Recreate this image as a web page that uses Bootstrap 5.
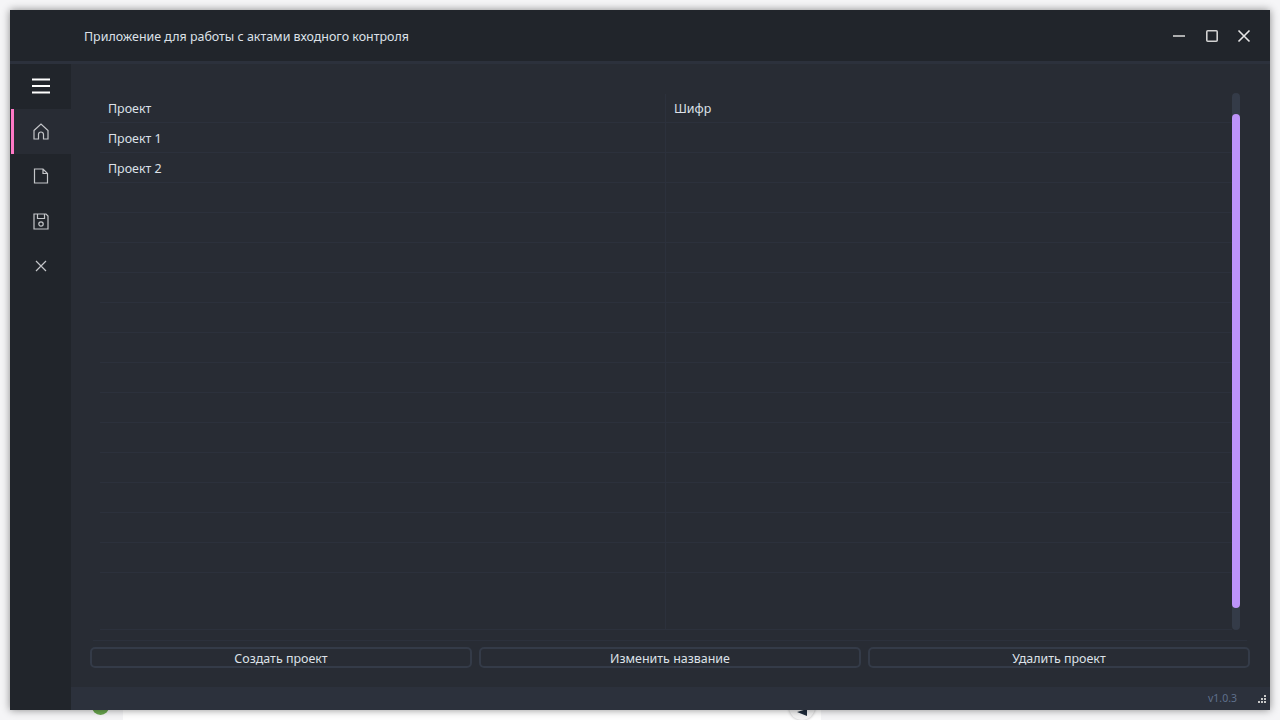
<!DOCTYPE html>
<html lang="ru">
<head>
    <meta charset="UTF-8">
    <title>Акты входного контроля</title>
    <link href="https://cdn.jsdelivr.net/npm/bootstrap@5.3.0/dist/css/bootstrap.min.css" rel="stylesheet">
    <style>
        html, body { height: 100%; overflow: hidden; }
        body { background: #f5f5f7; padding: 10px; font-family: "Noto Sans", "Open Sans", sans-serif; font-size: 12.45px; color: #dde1e8; position: relative; }
        .desk-page { position: absolute; left: 123px; top: 700px; width: 698px; height: 20px; background: #fff; }
        .desk-dot { position: absolute; left: 92px; top: 698px; width: 17px; height: 17px; border-radius: 50%; background: #6aa84f; }
        .desk-round { position: absolute; left: 789px; top: 694px; width: 26px; height: 26px; border-radius: 50%; background: #f4f4f4; box-shadow: 0 0 3px rgba(0, 0, 0, .3); }
        .desk-arrow { position: absolute; left: 797px; top: 709px; }
        .app-window { width: 1260px; height: 700px; background: #282c34; box-shadow: 0 0 8px rgba(0, 0, 0, .45); position: relative; }
        .title-bar { height: 51px; background: #21252b; padding-left: 74px; padding-right: 10px; }
        .title-text { margin-top: 3px; }
        .title-strip { height: 3px; background: #2c313c; }
        .win-btn { width: 32px; height: 32px; padding: 0; background: none; border: 0; }
        .side-menu { width: 61px; background: #21252b; }
        .side-item { height: 45px; }
        .side-item svg { margin-bottom: 1px; }
        .side-item.active-item { background: #282c34; border-left: 3px solid #ff79c6; margin-left: 1px; padding-right: 4px; }
        .table-frame { height: 577px; margin: 0 23px 6px 22px; padding: 30px 0 0 7px; border-bottom: 1px solid #2c313c; }
        .grid-wrap { width: 1132px; }
        .grid-row { height: 30px; border-bottom: 1px solid #2c313c; }
        .grid-row.grid-head { height: 29px; }
        .grid-row.grid-last { height: 57px; }
        .grid-cell { padding-left: 8px; line-height: 31px; }
        .grid-head .grid-cell { line-height: 29px; }
        .grid-cell + .grid-cell { border-left: 1px solid #2c313c; }
        .first-col { width: 565px; }
        .v-scroll { width: 8px; height: 537px; margin-top: -1px; background: #343b48; border-radius: 4px; padding-top: 21px; }
        .v-thumb { height: 494px; background: #bd93f9; border-radius: 4px; }
        .action-row { padding: 0 20px 0 19px; gap: 7px; }
        .action-btn { flex: 1 1 0; height: 21px; padding: 0; line-height: 19px; font-size: 12.45px; color: #dde1e8; background: #282c34; border: 2px solid #343b48; border-radius: 5px; }
        .status-bar { height: 23px; background: #2c313c; padding-right: 3px; }
        .version-text { font-size: 10.5px; color: #5f708c; margin-right: 20px; }
    </style>
</head>
<body>
    <div class="desk-page"></div>
    <div class="desk-dot"></div>
    <div class="desk-round"></div>
    <svg class="desk-arrow" width="12" height="7" viewBox="0 0 12 7"><path d="M0 3 10 0v7z" fill="#1f2d3d"/></svg>

    <div class="app-window d-flex flex-column">
        <!-- Title bar -->
        <div class="title-bar d-flex align-items-center justify-content-between">
            <span class="title-text">Приложение для работы с актами входного контроля</span>
            <div class="d-flex">
                <button class="win-btn" aria-label="Свернуть"><svg width="14" height="14" viewBox="0 0 14 14"><path d="M0 7h12" stroke="#d2d2d2" stroke-width="1.6"/></svg></button>
                <button class="win-btn" aria-label="Развернуть"><svg width="14" height="14" viewBox="0 0 14 14"><rect x="1.8" y="1.8" width="10.4" height="10.4" rx="1" fill="none" stroke="#d2d2d2" stroke-width="1.6"/></svg></button>
                <button class="win-btn" aria-label="Закрыть"><svg width="14" height="14" viewBox="0 0 14 14"><path d="M1.5 1.5l11 11M12.5 1.5l-11 11" stroke="#e6e6e6" stroke-width="1.6"/></svg></button>
            </div>
        </div>
        <div class="title-strip"></div>

        <div class="d-flex flex-grow-1">
            <!-- Side menu -->
            <div class="side-menu flex-shrink-0">
                <div class="side-item d-flex align-items-center justify-content-center">
                    <svg width="20" height="16" viewBox="0 0 20 16"><path d="M1 1.5h18M1 8h18M1 14.5h18" stroke="#fff" stroke-width="2.2"/></svg>
                </div>
                <div class="side-item active-item d-flex align-items-center justify-content-center">
                    <svg width="16" height="17" viewBox="0 0 16 17" fill="none" stroke="#c4c6c9" stroke-width="1.2"><path d="M1 7.5 8 1l7 6.5V16h-4.5v-4.5a2.5 2.5 0 0 0-5 0V16H1z"/></svg>
                </div>
                <div class="side-item d-flex align-items-center justify-content-center">
                    <svg width="16" height="16" viewBox="0 0 16 16" fill="none" stroke="#c4c6c9" stroke-width="1.2"><path d="M1.5 1h8.5l4.5 4.5V15h-13z M10 1v4.5h4.5"/></svg>
                </div>
                <div class="side-item d-flex align-items-center justify-content-center">
                    <svg width="16" height="17" viewBox="0 0 16 17" fill="none" stroke="#c4c6c9" stroke-width="1.2"><path d="M1 1h12l2 2v13H1z M4.5 1v4.5h7V1"/><circle cx="8" cy="11" r="2.2"/></svg>
                </div>
                <div class="side-item d-flex align-items-center justify-content-center">
                    <svg width="14" height="14" viewBox="0 0 14 14"><path d="M2 2l10 10M12 2 2 12" stroke="#c4c6c9" stroke-width="1.2"/></svg>
                </div>
            </div>

            <!-- Content -->
            <div class="flex-grow-1 d-flex flex-column">
                <div class="table-frame d-flex">
                    <div class="grid-wrap" id="grid"></div>
                    <div class="v-scroll"><div class="v-thumb"></div></div>
                </div>
                <div class="action-row d-flex">
                    <button class="action-btn">Создать проект</button>
                    <button class="action-btn">Изменить название</button>
                    <button class="action-btn">Удалить проект</button>
                </div>
                <div class="status-bar d-flex align-items-center justify-content-end mt-auto">
                    <span class="version-text">v1.0.3</span>
                    <svg width="10" height="10" viewBox="0 0 10 10" fill="#c8c8c8"><path d="M7 1h2v2H7zM4 4h2v2H4zM7 4h2v2H7zM1 7h2v2H1zM4 7h2v2H4zM7 7h2v2H7z"/></svg>
                </div>
            </div>
        </div>
    </div>

    <script>
        const rows = ["Проект 1", "Проект 2"];
        let html = '<div class="grid-row grid-head d-flex"><div class="grid-cell first-col">Проект</div><div class="grid-cell flex-grow-1">Шифр</div></div>';
        for (let i = 0; i < 16; i++) {
            const rowClass = i === 15 ? "grid-row grid-last d-flex" : "grid-row d-flex";
            html += `<div class="${rowClass}"><div class="grid-cell first-col">${rows[i] || ""}</div><div class="grid-cell flex-grow-1"></div></div>`;
        }
        document.getElementById("grid").innerHTML = html;
    </script>
    <script src="https://cdn.jsdelivr.net/npm/bootstrap@5.3.0/dist/js/bootstrap.bundle.min.js"></script>
</body>
</html>
